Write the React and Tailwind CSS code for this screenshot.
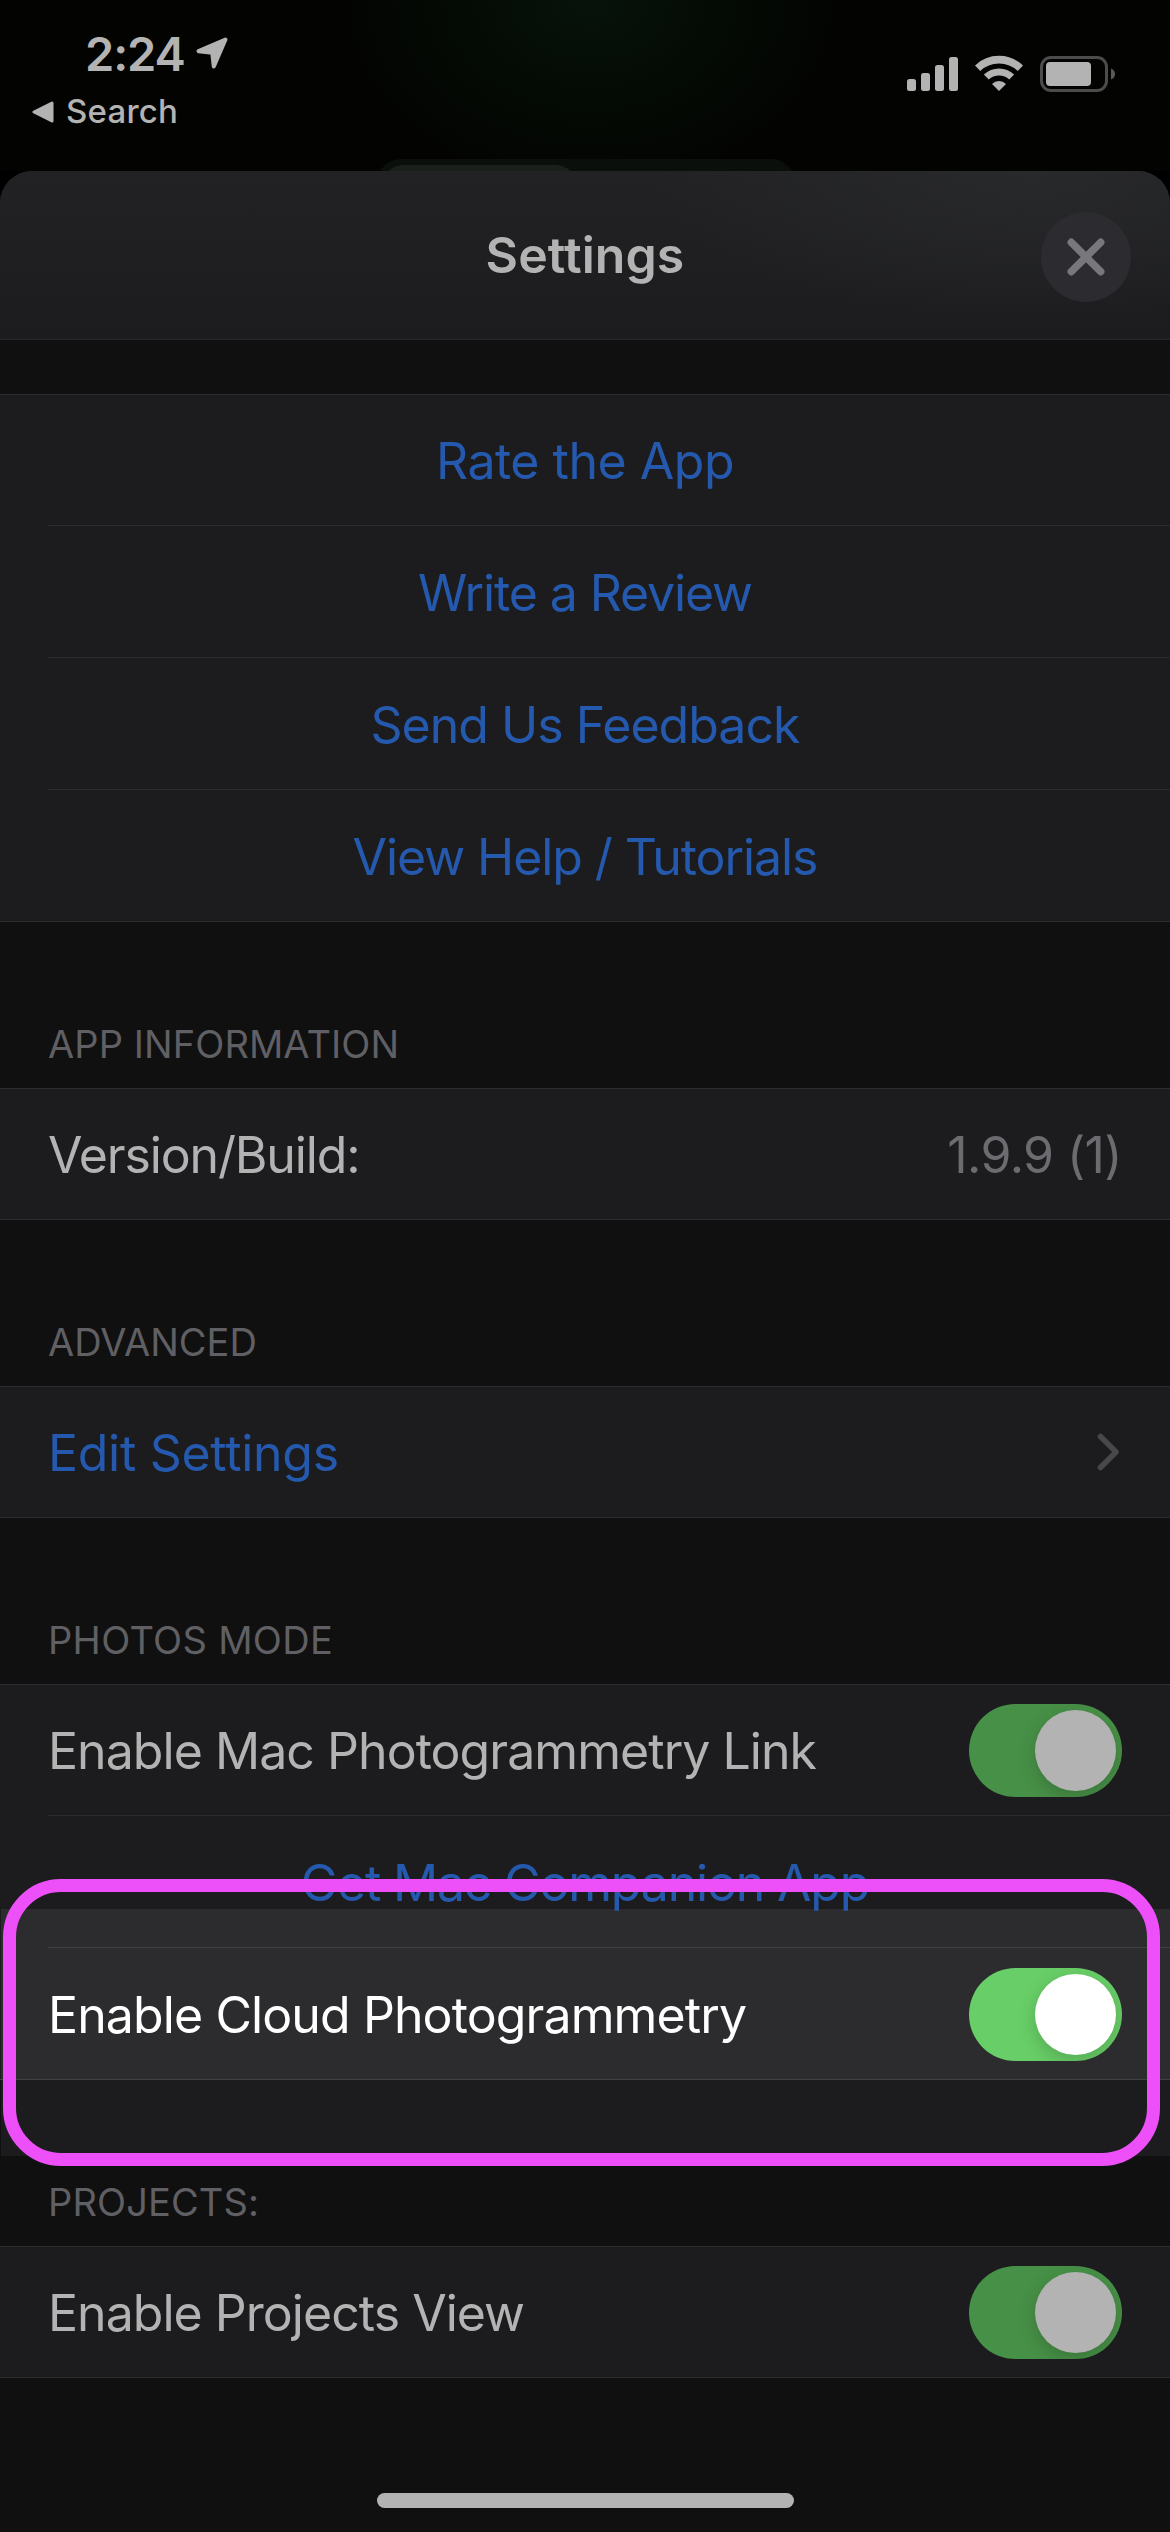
function StatusBar() {
  return (
    <div className="relative flex h-[171px] items-start justify-between bg-[radial-gradient(ellipse_250px_190px_at_590px_0px,#07130a_0%,#040a04_55%,#030402_100%)] pt-[25px]">
      <div className="flex flex-col">
        <div className="flex h-[57px] items-center pl-[85px]">
          <span className="text-[47px] font-semibold leading-[57px] tracking-[-1.14px]">2:24</span>
          <svg className="mt-[-2px] ml-[10px]" width="34" height="34" viewBox="0 0 34 34">
            <path d="M30.5 3.5 L3.5 15.2 L17.2 16.8 L18.8 30.5 Z" fill="#b3b3b3" stroke="#b3b3b3" strokeWidth="4" strokeLinejoin="round" />
          </svg>
        </div>
        <div className="mt-[7px] flex h-[44px] items-center pl-[32px]">
          <svg className="mt-[2px]" width="22" height="22" viewBox="0 0 22 22">
            <path d="M20 2 L2 11 L20 20 Z" fill="#b3b3b3" stroke="#b3b3b3" strokeWidth="3" strokeLinejoin="round" />
          </svg>
          <span className="ml-[12px] text-[33px] font-medium leading-[44px] tracking-[0.21px]">Search</span>
        </div>
      </div>
      <div className="flex items-start gap-[17px] pr-[54px] pt-[30px]">
        <svg width="51" height="36" viewBox="0 0 51 36" fill="#b3b3b3">
          <rect x="0" y="24" width="9" height="12" rx="2.5" />
          <rect x="14" y="18" width="9" height="18" rx="2.5" />
          <rect x="28" y="10" width="9" height="26" rx="2.5" />
          <rect x="42" y="2" width="9" height="34" rx="2.5" />
        </svg>
        <svg width="48" height="36" viewBox="0 0 48 36" fill="none" stroke="#b3b3b3">
          <path d="M2.6 13.2 A31 31 0 0 1 45.4 13.2" strokeWidth="7.6" />
          <path d="M11.3 22 A18.4 18.4 0 0 1 36.7 22" strokeWidth="7" />
          <path d="M24 36 L17 29 A9.9 9.9 0 0 1 31 29 Z" fill="#b3b3b3" stroke="none" />
        </svg>
        <svg className="mt-px" width="76" height="36" viewBox="0 0 76 36">
          <rect x="1.5" y="1.5" width="65" height="33" rx="9.5" fill="none" stroke="#4c4c4c" strokeWidth="3" />
          <rect x="6" y="6" width="45" height="24" rx="4" fill="#b3b3b3" />
          <path d="M71 12.5 Q75 14 75 18 Q75 22 71 23.5 Z" fill="#5a5a5a" />
        </svg>
      </div>
      <div className="absolute left-[377px] top-[159px] h-[60px] w-[418px] rounded-[24px] bg-[#0b0f0b] p-[6px]">
        <div className="h-full w-[193px] rounded-[20px] bg-[#1a1f1a]" />
      </div>
    </div>
  );
}

function Header() {
  return (
    <header className="relative flex h-[169px] items-center justify-center rounded-t-[32px] border-b border-[#29292b] bg-[radial-gradient(ellipse_380px_150px_at_88%_0%,#28292a_0%,transparent_100%),linear-gradient(to_bottom,#222224,#1c1c1e)]">
      <h1 className="text-[50px] font-semibold leading-[60px] tracking-[0.07px]">Settings</h1>
      <button className="absolute right-[39px] top-[41px] flex size-[90px] items-center justify-center rounded-full bg-[#2c2c30]">
        <svg className="mb-px mr-px" width="38" height="38" viewBox="0 0 38 38" fill="none" stroke="#77777c" strokeWidth="7.5" strokeLinecap="round">
          <path d="M4.3 4.3 L33.7 33.7 M33.7 4.3 L4.3 33.7" />
        </svg>
      </button>
    </header>
  );
}

function Row({ first, center, bright, strip, children }) {
  return (
    <div className={`relative flex flex-col ${first ? "h-[131px]" : "h-[132px]"}`}>
      {bright && <div className="absolute bottom-0 left-px right-0 top-0 bg-[#2c2c2e]" />}
      {strip && <div className="absolute bottom-0 left-px right-0 h-[38px] bg-[#2c2c2e]" />}
      <div className={`relative h-px shrink-0 ${first ? "bg-[#2d2d2f]" : bright ? "ml-12 bg-[#414144]" : "ml-12 bg-[#2b2b2d]"}`} />
      <div className={`relative mt-auto flex h-[129px] items-center px-12 text-[50px] leading-[60px] ${center ? "justify-center text-[#2459ae]" : "justify-between"}`}>
        {children}
      </div>
    </div>
  );
}

function Group({ bright, children }) {
  return (
    <section className={`border-b bg-[#1c1c1e] ${bright ? "border-[#414144]" : "border-[#2d2d2f]"}`}>
      {children}
    </section>
  );
}

function Label({ className = "h-[166px]", children }) {
  return (
    <div className={`flex items-end px-12 pb-[21px] text-[38px] leading-[46px] text-[#5f5f64] ${className}`}>
      {children}
    </div>
  );
}

function Toggle({ bright }) {
  return (
    <div className={`flex h-[93px] w-[153px] items-center justify-end overflow-hidden rounded-full pr-[6px] ${bright ? "bg-[#68ce67]" : "bg-[#479047]"}`}>
      <div className={`size-[81px] rounded-full shadow-[0_6px_18px_rgba(0,0,0,0.18)] ${bright ? "bg-white" : "bg-[#b3b3b3]"}`} />
    </div>
  );
}

export default function App() {
  return (
    <div className="relative flex h-[2532px] w-[1170px] flex-col overflow-hidden bg-black font-[Inter,sans-serif] text-[#b3b3b3]">
      <StatusBar />
      <div className="relative flex flex-1 flex-col rounded-t-[32px] bg-[#101010]">
        <Header />
        <main className="flex flex-col pt-[54px]">
          <Group>
            <Row first center><span className="tracking-[-0.49px]">Rate the App</span></Row>
            <Row center><span className="tracking-[-1.12px]">Write a Review</span></Row>
            <Row center><span className="tracking-[-0.99px]">Send Us Feedback</span></Row>
            <Row center><span className="tracking-[-1.07px]">View Help / Tutorials</span></Row>
          </Group>
          <Label><span className="tracking-[0.08px]">APP INFORMATION</span></Label>
          <Group>
            <Row first>
              <span className="tracking-[-1.15px]">Version/Build:</span>
              <span className="tracking-[-0.6px] text-[#6b6b70]">1.9.9 (1)</span>
            </Row>
          </Group>
          <Label>ADVANCED</Label>
          <Group>
            <Row first>
              <span className="tracking-[-0.3px] text-[#2459ae]">Edit Settings</span>
              <svg className="mb-[2px] mr-[2px]" width="23" height="38" viewBox="0 0 23 38" fill="none" stroke="#48484b" strokeWidth="5.5" strokeLinecap="round" strokeLinejoin="round">
                <path d="M3.5 3.5 L19 19 L3.5 34.5" />
              </svg>
            </Row>
          </Group>
          <Label><span className="tracking-[0.32px]">PHOTOS MODE</span></Label>
          <Group bright>
            <Row first>
              <span className="tracking-[-0.95px]">Enable Mac Photogrammetry Link</span>
              <Toggle />
            </Row>
            <Row center strip><span className="tracking-[-1.18px]">Get Mac Companion App</span></Row>
            <Row bright>
              <span className="tracking-[-0.89px] text-white">Enable Cloud Photogrammetry</span>
              <Toggle bright />
            </Row>
          </Group>
          <div className="ml-px h-[76px] bg-[#1c1c1e]" />
          <Label className="h-[90px]"><span className="tracking-[0.13px]">PROJECTS:</span></Label>
          <Group>
            <Row first>
              <span className="tracking-[-0.97px]">Enable Projects View</span>
              <Toggle />
            </Row>
          </Group>
        </main>
        <div className="mx-auto mb-6 mt-auto h-[15px] w-[417px] rounded-full bg-[#b3b3b3]" />
      </div>
      <div className="pointer-events-none absolute left-[3px] top-[1879px] h-[287px] w-[1157px] rounded-[58px] border-[13px] border-[#ed50f9]" />
    </div>
  );
}
